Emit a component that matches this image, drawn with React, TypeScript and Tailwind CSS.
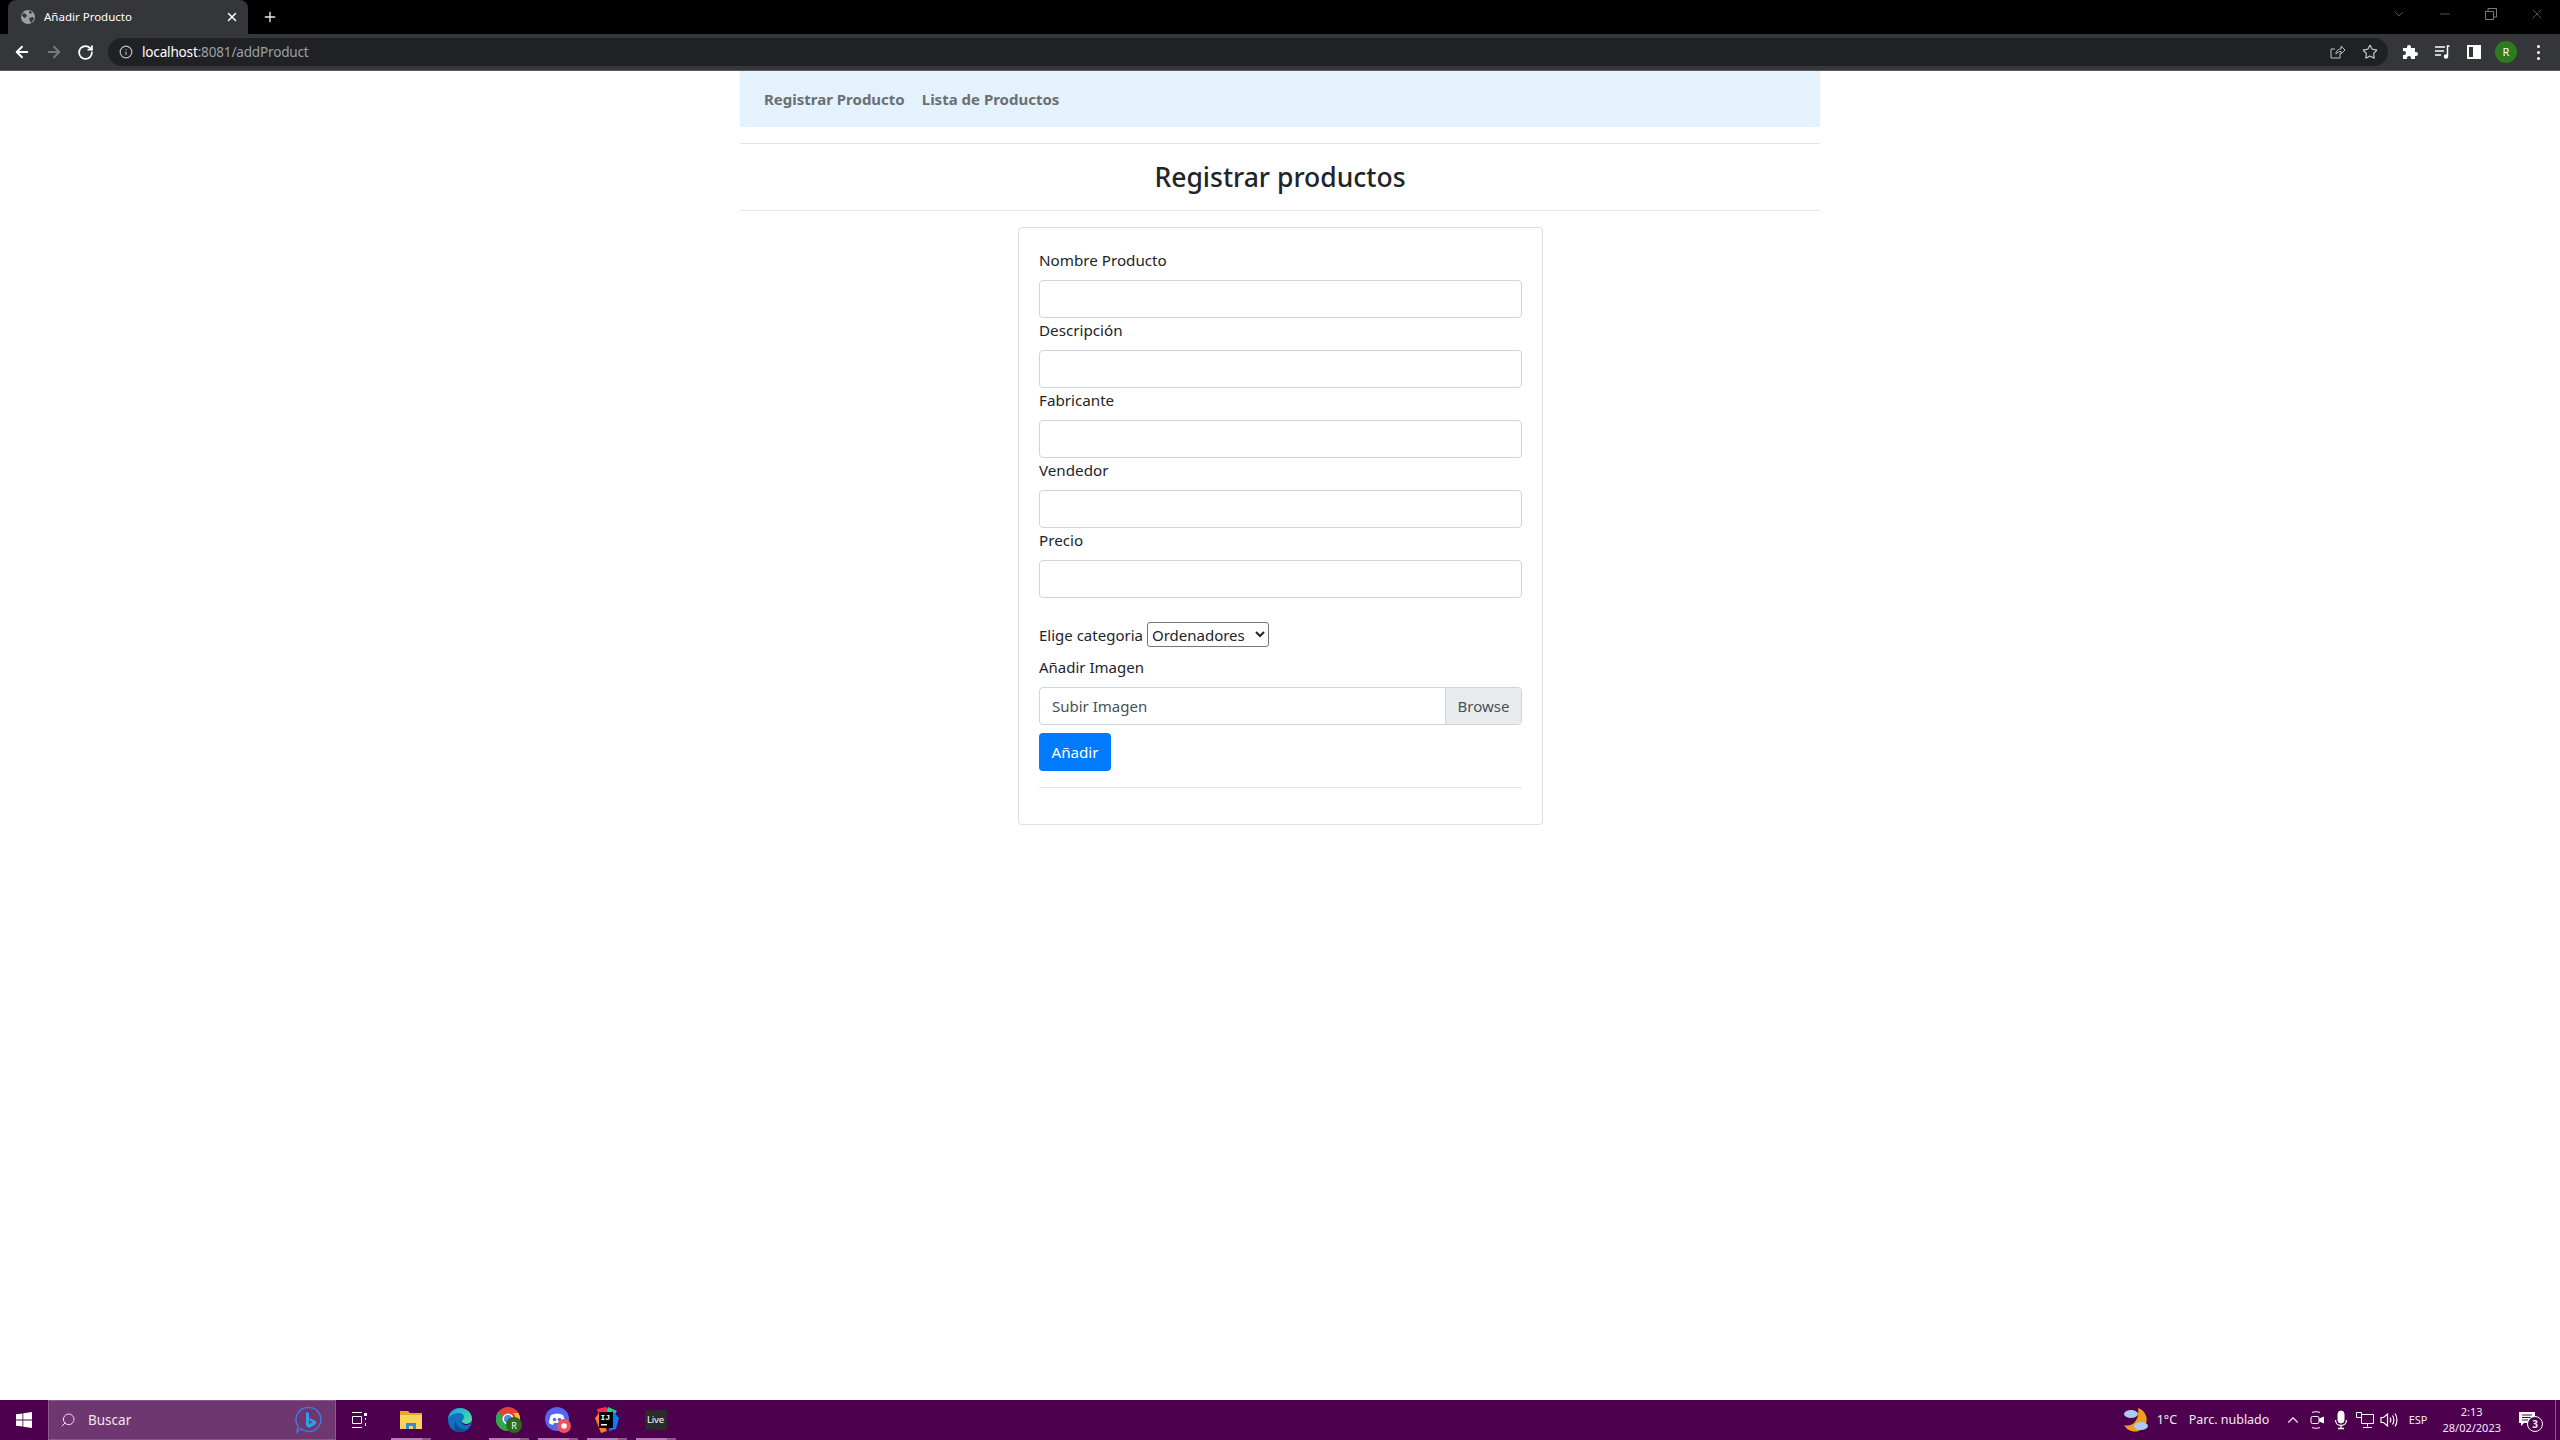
import { ArrowLeft, ArrowRight, RotateCw, Info, Star, Plus, X, Minus, ChevronDown, ChevronUp, Search } from 'lucide-react'

const uiFont = 'font-["Noto_Sans","Open_Sans",sans-serif]'

const fields = ['Nombre Producto', 'Descripción', 'Fabricante', 'Vendedor', 'Precio']

function TabBar() {
    return (
        <div className="flex h-[34px] bg-black">
            <div className="ml-2 flex h-[34px] w-[240px] items-center rounded-t-lg bg-[#35363a] pl-[12px] pr-[9px]">
                <svg width="16" height="16" viewBox="0 0 16 16" className="shrink-0">
                    <circle cx="8" cy="8" r="7" fill="#9aa0a6" />
                    <path d="M3 4l3 1 1 2-2 2-3-2zM9 2l3 1-1 2-2-1zM9 9l4-1 1 2-3 4-1-2z" fill="#35363a" />
                </svg>
                <span className="ml-[8px] flex-1 text-[11.5px] text-white">Añadir Producto</span>
                <X size={14} strokeWidth={2.5} className="text-white" />
            </div>
            <div className="ml-[14px] flex h-[34px] items-center">
                <Plus size={16} strokeWidth={2} className="text-[#e8eaed]" />
            </div>
            <div className="ml-auto flex h-[28px] items-center text-[#7a7a7a]">
                <ChevronDown size={16} strokeWidth={1} className="mr-[30px]" />
                <Minus size={16} strokeWidth={1} className="mr-[32px]" />
                <svg width="12" height="12" viewBox="0 0 12 12" fill="none" stroke="currentColor" className="mr-[32px]">
                    <path d="M0.5 3.5h8v8h-8zM3 3V0.5h8.5V9H9" />
                </svg>
                <X size={16} strokeWidth={1} className="mr-[15px]" />
            </div>
        </div>
    )
}

function ToolBar() {
    return (
        <div className="flex h-[37px] items-center border-b border-[#5a5b5e] bg-[#35363a]">
            <ArrowLeft size={18} strokeWidth={2.5} className="ml-[13px] text-white" />
            <ArrowRight size={18} strokeWidth={2.5} className="ml-[14px] text-[#77787b]" />
            <RotateCw size={17} strokeWidth={2.5} className="ml-[14px] text-white" />
            <div className="ml-[14px] flex h-[28px] flex-1 items-center rounded-full bg-[#202124] pl-[11px] pr-[10px]">
                <Info size={14} className="text-[#bdc1c6]" />
                <span className="ml-[9px] text-[13.6px] tracking-[-0.2px] text-white">
                    localhost<span className="text-[#9aa0a6]">:8081/addProduct</span>
                </span>
                <svg width="16" height="16" viewBox="0 0 16 16" fill="none" stroke="#bdc1c6" className="ml-auto">
                    <path d="M10 9v5H1V5h4M6 10c0-4 3-5 5-5V2l4 4-4 4V7.500c-2 0-4 .5-5 2.500z" />
                </svg>
                <Star size={16} strokeWidth={1.8} className="ml-[16px] text-[#bdc1c6]" />
            </div>
            <svg width="16" height="16" viewBox="0 0 16 16" fill="#fff" className="ml-[14px]">
                <path d="M1 4h4V3a2 2 0 014 0v1h4v4h1a2 2 0 010 4h-1v3H9v-1a2 2 0 00-4 0v1H1v-4h1a2 2 0 000-4H1z" />
            </svg>
            <svg width="16" height="14" viewBox="0 0 16 14" fill="none" stroke="#fff" strokeWidth="1.500" className="ml-[17px]">
                <path d="M0 2h10M0 6h9M0 10h6" />
                <path d="M14.500 1h-2v10" />
                <circle cx="11" cy="11.500" r="1.500" fill="#fff" />
            </svg>
            <div className="ml-[16px] flex h-[14px] w-[14px] border-2 border-white">
                <div className="ml-auto h-full w-[6px] bg-white" />
            </div>
            <div className={`ml-[14px] flex h-[22px] w-[22px] items-center justify-center rounded-full bg-[#2d7a1f] text-[11px] text-white ${uiFont}`}>
                R
            </div>
            <div className="ml-[20px] mr-[20px] flex flex-col gap-[3px]">
                <div className="h-[3px] w-[3px] rounded-full bg-white" />
                <div className="h-[3px] w-[3px] rounded-full bg-white" />
                <div className="h-[3px] w-[3px] rounded-full bg-white" />
            </div>
        </div>
    )
}

function Field({ label }: { label: string }) {
    return (
        <div className="flex flex-col">
            <label className="h-[32px] text-[15.2px] leading-[24px] text-[#212529]">{label}</label>
            <input className="h-[38px] w-full rounded-[4px] border border-[#ced4da] bg-white" />
        </div>
    )
}

function ProductForm() {
    return (
        <div className="ml-[278px] mt-[16px] h-[598px] w-[525px] rounded-[4px] border border-[#dfdfdf] px-[20px] pt-[20px]">
            {fields.map((f) => (
                <Field key={f} label={f} />
            ))}
            <div className="mt-[24px] flex h-[25px] items-center text-[15px] text-[#212529]">
                <span className="pt-[1px]">Elige categoria</span>
                <select defaultValue="Ordenadores" className="ml-[4px] h-[25px] w-[122px] rounded-[3px] border border-[#767676] bg-white text-[15px]">
                    <option>Ordenadores</option>
                </select>
            </div>
            <div className="mt-[8px] h-[32px] text-[15px] leading-[24px] text-[#212529]">Añadir Imagen</div>
            <div className="flex h-[38px] overflow-hidden rounded-[4px] border border-[#ced4da] text-[15px] text-[#495057]">
                <div className="flex flex-1 items-center px-[12px] pt-[1px]">Subir Imagen</div>
                <div className="flex w-[76px] items-center justify-center border-l border-[#ced4da] bg-[#e9ecef] pt-[1px]">Browse</div>
            </div>
            <button className="mt-[8px] h-[38px] w-[72px] rounded-[4px] bg-[#007bff] pt-[1px] text-[15.2px] text-white">Añadir</button>
            <hr className="mt-[16px] border-[#e5e5e5]" />
        </div>
    )
}

function Underline() {
    return (
        <div className="absolute bottom-0 left-[5px] flex h-[2px] w-[40px]">
            <div className="w-[31px] bg-[#b57fb5]" />
            <div className="w-[9px] bg-[#8a5a8a]" />
        </div>
    )
}

function TaskIcons() {
    return (
        <div className="flex h-full items-center">
            <div className="relative flex h-full w-[49px] items-center justify-center">
                <svg width="22" height="20" viewBox="0 0 22 20">
                    <path d="M0 1h8l2 2h12v4H0z" fill="#e8a825" />
                    <path d="M0 5h22v14H0z" fill="#fcd45c" />
                    <path d="M6 19v-6h10v6h-3v-3h-4v3z" fill="#2b8fd6" />
                </svg>
                <Underline />
            </div>
            <div className="flex h-full w-[49px] items-center justify-center">
                <svg width="24" height="24" viewBox="0 0 24 24">
                    <defs>
                        <linearGradient id="edge-top" x1="0" y1="0" x2="1" y2="1">
                            <stop offset="0" stopColor="#1b9de2" />
                            <stop offset="1" stopColor="#50e6a0" />
                        </linearGradient>
                    </defs>
                    <circle cx="12" cy="12" r="12" fill="#0f6fc0" />
                    <path d="M0 11C1 4 6 0 12 0c7 0 12 5 12 11 0 3-3 5-6 5-2 0-4-1-4-2.500 0-2 2-2 2-4.500S13 5 11 5C6 5 2 7 0 11z" fill="url(#edge-top)" />
                    <path d="M24 13c-1 3-4 4.500-7 4-2-.4-3.500-1.500-4-3.500 1 1.500 3 2.500 5 2.500 2.500 0 5-1 6-3z" fill="#4d004d" />
                    <path d="M8 13c0 5 4 9 10 8-2 2-4 3-6 3-5 0-8-5-4-11z" fill="#0a4f95" />
                </svg>
            </div>
            <div className="relative flex h-full w-[49px] items-center justify-center">
                <svg width="26" height="26" viewBox="0 0 26 26">
                    <circle cx="12" cy="12" r="12" fill="#e34234" />
                    <path d="M22.400 6A12 12 0 0112 24l5-9a5.500 5.500 0 000-9z" fill="#fbc02d" />
                    <path d="M12 24A12 12 0 012.500 4.500L7 10a5.500 5.500 0 005 8l5-3-5 9z" fill="#2fa84f" />
                    <circle cx="12" cy="12" r="5.500" fill="#fff" />
                    <circle cx="12" cy="12" r="4" fill="#4a90e2" />
                    <circle cx="18" cy="18" r="8" fill="#2d6a1f" />
                    <text x="18" y="21.500" textAnchor="middle" fontSize="9" fill="#fff" fontFamily="Noto Sans">R</text>
                </svg>
                <Underline />
            </div>
            <div className="relative flex h-full w-[49px] items-center justify-center">
                <svg width="26" height="26" viewBox="0 0 26 26">
                    <circle cx="12" cy="12" r="12" fill="#5865f2" />
                    <path d="M6 8c4-2 8-2 12 0 1.500 3 2 6 2 8-1 1-2.500 1.500-4 2l-1-2h-6l-1 2c-1.500-.5-3-1-4-2 0-2 .5-5 2-8z" fill="#fff" />
                    <circle cx="9.500" cy="12.500" r="1.700" fill="#5865f2" />
                    <circle cx="14.500" cy="12.500" r="1.700" fill="#5865f2" />
                    <circle cx="19" cy="19" r="7" fill="#f0525a" />
                    <circle cx="19" cy="19" r="2.800" fill="#fff" />
                </svg>
                <Underline />
            </div>
            <div className="relative flex h-full w-[49px] items-center justify-center">
                <svg width="24" height="26" viewBox="0 0 24 26">
                    <path d="M2 2l9-2 5 5-12 5z" fill="#fe2857" />
                    <path d="M13 0l9 4-4 6-6-4z" fill="#21d789" />
                    <path d="M0 11l4-5 8 18-6 2z" fill="#fc801d" />
                    <path d="M17 3l7 8-3 11-7 2z" fill="#087cfa" />
                    <rect x="4" y="5" width="14" height="16" fill="#000" />
                    <text x="5.500" y="12.500" fontSize="8" fontWeight="700" fill="#fff" fontFamily="Liberation Mono">IJ</text>
                    <rect x="6" y="17" width="6" height="1.500" fill="#fff" />
                </svg>
                <Underline />
            </div>
            <div className="relative flex h-full w-[49px] items-center justify-center">
                <div className="flex h-[20px] w-[22px] items-center justify-center bg-[#2b2b2b] text-[9.5px] tracking-[-0.2px] text-white">Live</div>
                <Underline />
            </div>
        </div>
    )
}

function TaskBar() {
    return (
        <div className={`flex h-[40px] items-center bg-[#4d004d] text-white ${uiFont}`}>
            <div className="flex h-full w-[48px] items-center justify-center">
                <svg width="16" height="16" viewBox="0 0 16 16" fill="#fff">
                    <path d="M0 2.300l6.500-.9v6.200H0zM7.300 1.300L16 0v7.600H7.300zM0 8.400h6.500v6.200L0 13.700zM7.300 8.400H16V16l-8.700-1.200z" />
                </svg>
            </div>
            <div className="flex h-full w-[288px] items-center border border-[#8a5a8a] bg-[#6f376f] pl-[11px] pr-[12px]">
                <Search size={16} strokeWidth={1.5} className="-scale-x-100 text-[#f0e0f0]" />
                <span className="ml-[12px] text-[13.5px] text-[#f0e6f0]">Buscar</span>
                <svg width="28" height="28" viewBox="0 0 28 28" fill="none" className="ml-auto">
                    <path d="M14 1.500a12 12 0 11-8 21L2 26l1-6A12 12 0 0114 1.500z" stroke="#3a7be0" strokeWidth="1.500" />
                    <path d="M11 6l3 1v11l4-2-3-1-1-3 7 3v3l-7 4-3-2z" fill="#2d9fe8" />
                </svg>
            </div>
            <div className="flex h-full w-[50px] items-center justify-center pr-[4px]">
                <svg width="16" height="16" viewBox="0 0 16 16" fill="none" stroke="#fff">
                    <path d="M1 .5h10M1 15.500h10M1.500 4.500h9v7h-9zM14.500 6v2M14.500 11v3" />
                    <rect x="13" y="1" width="3" height="3" fill="#fff" stroke="none" />
                </svg>
            </div>
            <TaskIcons />
            <div className="ml-auto flex h-full items-center text-[12.5px] text-[#f5eaf5]">
                <svg width="26" height="26" viewBox="0 0 26 26" className="mr-[8px]">
                    <path d="M15 1a12 12 0 11-14 17c9 3 16-6 14-17z" fill="#f29d1f" />
                    <ellipse cx="8" cy="7" rx="7" ry="4" fill="#a9cdf0" />
                    <ellipse cx="18" cy="19" rx="7" ry="4" fill="#a9cdf0" />
                </svg>
                <span className="w-[20px]">1°C</span>
                <span className="ml-[12px] w-[80px] whitespace-nowrap">Parc. nublado</span>
                <ChevronUp size={18} strokeWidth={1.5} className="ml-[15px]" />
                <svg width="14" height="20" viewBox="0 0 14 20" fill="none" stroke="#fff" className="ml-[8px]">
                    <path d="M2 2.500c2-1 6-1 8 0M2 17.500c2 1 6 1 8 0" />
                    <rect x="1" y="6.500" width="8" height="7" rx="1.500" />
                    <path d="M9.500 9l4-2v6l-4-2z" fill="#fff" />
                </svg>
                <svg width="18" height="20" viewBox="0 0 18 20" fill="none" stroke="#fff" className="ml-[8px]">
                    <rect x="6" y="1" width="6" height="12" rx="3" fill="#fff" />
                    <path d="M3.500 10c0 3 2 5.500 5.500 5.500s5.500-2.500 5.500-5.500M9 15.500v3M6 18.500h6" strokeWidth="1.300" />
                </svg>
                <svg width="18" height="16" viewBox="0 0 18 16" fill="none" stroke="#fff" className="ml-[6px]">
                    <path d="M5.500 2.500h12v9h-12zM.5.500h5v5h-5zM11.500 11.500v3M7 15.500h9" />
                </svg>
                <svg width="18" height="18" viewBox="0 0 18 18" fill="none" stroke="#fff" strokeWidth="1.200" className="ml-[6px]">
                    <path d="M1 6.500h2.500L7.500 3v12l-4-3.500H1z" />
                    <path d="M10 6.500c1 1.500 1 3.500 0 5M12.500 4.500c1.800 2.500 1.800 6.500 0 9M15 2.500c2.600 3.500 2.600 9.500 0 13" />
                </svg>
                <span className="ml-[11px] text-[11px]">ESP</span>
                <div className="ml-[15px] flex flex-col items-center text-[11px] leading-[16px]">
                    <span>2:13</span>
                    <span>28/02/2023</span>
                </div>
                <div className="relative ml-[18px] mr-[12px] h-[20px] w-[24px]">
                    <svg width="16" height="16" viewBox="0 0 16 16" fill="#fff" className="mt-[1px]">
                        <path d="M0 1h16v11H5l-3 3v-3H0z" />
                        <path d="M3 4h10M3 6.500h10M3 9h6" stroke="#4d004d" />
                    </svg>
                    <div className="absolute right-0 top-[6px] flex h-[16px] w-[16px] items-center justify-center rounded-full border border-white bg-[#4d004d] text-[10px] font-bold">3</div>
                </div>
            </div>
            <div className="h-full w-[1px] bg-[#8a5a8a]" />
            <div className="h-full w-[4px]" />
        </div>
    )
}

export default function App() {
    return (
        <div className={`flex h-screen flex-col bg-white ${uiFont}`}>
            <TabBar />
            <ToolBar />
            <main className="flex-1 overflow-hidden">
                <div className="mx-auto w-[1080px]">
                    <nav className="flex h-[56px] items-center gap-[17px] bg-[#e3f2fd] px-6 pt-[1px] text-[15px] font-bold text-[#6c6f72]">
                        <a>Registrar Producto</a>
                        <a>Lista de Productos</a>
                    </nav>
                    <hr className="mt-4 border-[#e5e5e5]" />
                    <h3 className="flex h-[66px] items-center justify-center pt-[2px] text-[26.5px] font-medium text-[#212529]">Registrar productos</h3>
                    <hr className="border-[#e5e5e5]" />
                    <ProductForm />
                </div>
            </main>
            <TaskBar />
        </div>
    )
}
